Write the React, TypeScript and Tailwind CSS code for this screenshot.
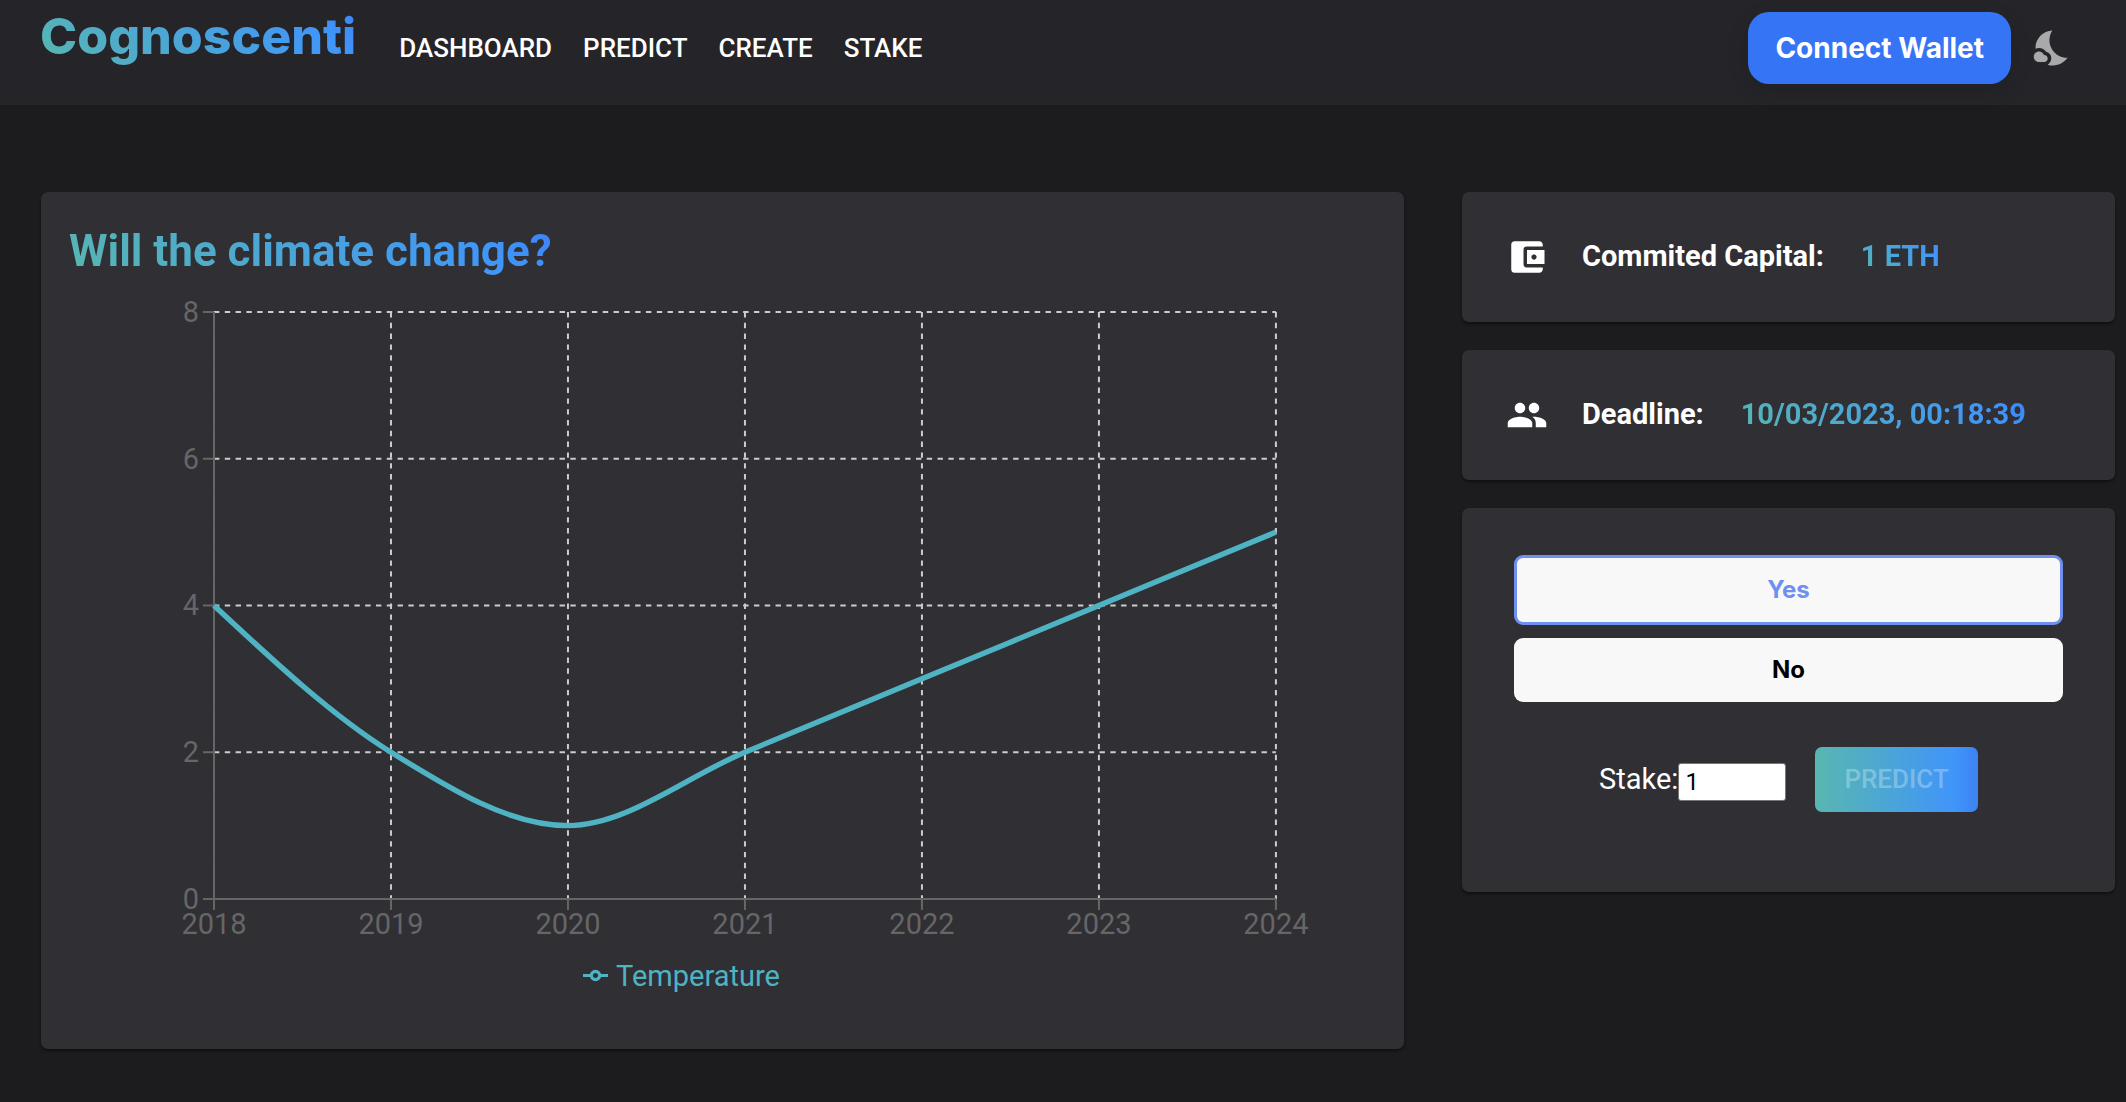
import { useId, useState } from "react";
import { MdAccountBalanceWallet, MdGroup, MdNightsStay } from "react-icons/md";

const gradientText =
  "bg-linear-45/srgb from-[#58b7b0] via-[#4095f9] via-85% to-[#3d82f4] bg-clip-text text-transparent";
const card = "rounded-[7px] bg-[#302f34] shadow-[0_2px_3px_rgba(0,0,0,0.45)]";

const navItems = ["DASHBOARD", "PREDICT", "CREATE", "STAKE"];

const data = [
  { year: 2018, value: 4 },
  { year: 2019, value: 2 },
  { year: 2020, value: 1 },
  { year: 2021, value: 2 },
  { year: 2022, value: 3 },
  { year: 2023, value: 4 },
  { year: 2024, value: 5 },
];

const LEFT = 145;
const TOP = 24;
const BOTTOM = 611;
const STEP = 177;
const RIGHT = LEFT + STEP * (data.length - 1);
const MAX = 8;

const xAt = (i: number) => LEFT + i * STEP;
const yAt = (v: number) => BOTTOM - (v / MAX) * (BOTTOM - TOP);

/** Monotone cubic interpolation through evenly spaced values. */
function monotonePath(values: number[]) {
  const n = values.length;
  const slope = values.slice(1).map((v, i) => v - values[i]);
  const tangent = values.map((_, i) => {
    if (i === 0 || i === n - 1) return 0;
    const a = slope[i - 1];
    const b = slope[i];
    return (Math.sign(a) + Math.sign(b)) * Math.min(Math.abs(a), Math.abs(b), Math.abs(a + b) / 4);
  });
  tangent[0] = (3 * slope[0] - tangent[1]) / 2;
  tangent[n - 1] = (3 * slope[n - 2] - tangent[n - 2]) / 2;
  let d = `M${xAt(0)},${yAt(values[0])}`;
  for (let i = 0; i < n - 1; i++) {
    d += `C${xAt(i + 1 / 3)},${yAt(values[i] + tangent[i] / 3)},${xAt(i + 2 / 3)},${yAt(
      values[i + 1] - tangent[i + 1] / 3,
    )},${xAt(i + 1)},${yAt(values[i + 1])}`;
  }
  return d;
}

function TemperatureChart() {
  const ticks = [0, 2, 4, 6, 8];
  return (
    <svg viewBox="0 0 1307 656" className="block w-full" role="img" aria-label="Temperature by year">
      <g stroke="#cccccc" strokeWidth="2" strokeDasharray="5.4 5.4">
        {ticks.map((t) => (
          <line key={t} x1={LEFT} x2={RIGHT} y1={yAt(t)} y2={yAt(t)} />
        ))}
        {data.map((p, i) => (
          <line key={p.year} x1={xAt(i)} x2={xAt(i)} y1={TOP} y2={BOTTOM} />
        ))}
      </g>
      <g stroke="#666666" strokeWidth="2">
        <line x1={LEFT} x2={RIGHT} y1={BOTTOM} y2={BOTTOM} />
        <line x1={LEFT} x2={LEFT} y1={TOP} y2={BOTTOM} />
        {ticks.map((t) => (
          <line key={t} x1={LEFT - 11} x2={LEFT} y1={yAt(t)} y2={yAt(t)} />
        ))}
        {data.map((p, i) => (
          <line key={p.year} x1={xAt(i)} x2={xAt(i)} y1={BOTTOM} y2={BOTTOM + 11} />
        ))}
      </g>
      <g fill="#666666" className="text-[29px]">
        {ticks.map((t) => (
          <text key={t} x={LEFT - 15} y={yAt(t) + 10} textAnchor="end">
            {t}
          </text>
        ))}
        {data.map((p, i) => (
          <text key={p.year} x={xAt(i)} y={BOTTOM + 35} textAnchor="middle">
            {p.year}
          </text>
        ))}
      </g>
      <path d={monotonePath(data.map((p) => p.value))} fill="none" stroke="#4fb3c4" strokeWidth="5.4" />
    </svg>
  );
}

function Header() {
  return (
    <header className="flex h-[105px] items-start justify-between bg-[#252429] pr-[52px] pl-10">
      <div className="flex items-start">
        <a
          href="#"
          className={`mt-1 mr-[43px] font-[Inter,sans-serif] text-[50px] leading-[64px] font-extrabold ${gradientText}`}
        >
          Cognoscenti
        </a>
        <nav className="mt-[30px] flex gap-[31px] text-[26px] leading-9 font-medium text-white">
          {navItems.map((item) => (
            <a key={item} href="#">
              {item}
            </a>
          ))}
        </nav>
      </div>
      <div className="flex items-center pt-3">
        <button className="h-[72px] rounded-[21px] bg-[#3574f5] px-[27px] font-[Inter,sans-serif] text-[28px] font-bold text-white shadow-[0_7px_21px_rgba(0,0,0,0.12)]">
          Connect Wallet
        </button>
        <button aria-label="Toggle dark mode" className="ml-[21px] text-[#a9a9ab]">
          <MdNightsStay className="size-[42px]" />
        </button>
      </div>
    </header>
  );
}

export default function App() {
  const stakeId = useId();
  const [choice, setChoice] = useState("Yes");
  return (
    <div className="min-h-screen bg-[#1c1c1e] font-[Roboto,sans-serif] text-[29px] text-white">
      <Header />
      <main className="grid grid-cols-[48fr_23fr] items-start gap-[58px] pt-[87px] pr-[11px] pb-[54px] pl-[41px]">
        <section className={`${card} px-7 pb-[52px]`}>
          <h1 className={`mt-[34px] w-fit text-[44px] leading-[50px] font-bold ${gradientText}`}>
            Will the climate change?
          </h1>
          <div className="pt-3">
            <TemperatureChart />
          </div>
          <div className="mt-[11px] flex items-center justify-center gap-2 pr-[82px] leading-[42px] text-[#4fb3c4]">
            <svg viewBox="0 0 32 32" className="size-[25px]" fill="none" stroke="currentColor" strokeWidth="4">
              <path d="M0,16h10.67A5.33,5.33,0,1,1,21.33,16H32M21.33,16A5.33,5.33,0,1,1,10.67,16" />
            </svg>
            Temperature
          </div>
        </section>

        <aside className="flex flex-col gap-7">
          <div className={`${card} flex h-[130px] items-center px-11 font-bold`}>
            <MdAccountBalanceWallet className="mr-[34px] size-[42px]" />
            <span className="mr-[37px]">Commited Capital:</span>
            <span className={gradientText}>1 ETH</span>
          </div>
          <div className={`${card} flex h-[130px] items-center px-11 font-bold`}>
            <MdGroup className="mr-[34px] size-[42px]" />
            <span className="mr-[37px]">Deadline:</span>
            <span className={gradientText}>10/03/2023, 00:18:39</span>
          </div>
          <div className={`${card} px-[52px] pt-[47px] pb-20`}>
            <div className="flex flex-col gap-[13px] font-[Inter,sans-serif] text-2xl font-bold">
              {["Yes", "No"].map((option) => (
                <button
                  key={option}
                  aria-pressed={choice === option}
                  onClick={() => setChoice(option)}
                  className={
                    choice === option
                      ? "h-[70px] rounded-[9px] border-3 border-[#7090f0] bg-[#f8f8f8] text-[#7090f0]"
                      : "h-16 rounded-[9px] bg-[#f8f8f8] text-black"
                  }
                >
                  {option}
                </button>
              ))}
            </div>
            <div className="mt-[45px] flex items-center justify-center">
              <label htmlFor={stakeId}>Stake:</label>
              <input
                id={stakeId}
                type="text"
                defaultValue="1"
                className="mt-1 mr-[29px] h-[38px] w-[108px] rounded-[3px] border border-[#767676] bg-white px-1.5 text-2xl text-black"
              />
              <button
                disabled
                className="h-[65px] rounded-[7px] bg-linear-90/srgb from-[#58b7b0] via-[#4095f9] via-85% to-[#3d82f4] px-[29px] text-[26px] font-medium text-white/30"
              >
                PREDICT
              </button>
            </div>
          </div>
        </aside>
      </main>
    </div>
  );
}
